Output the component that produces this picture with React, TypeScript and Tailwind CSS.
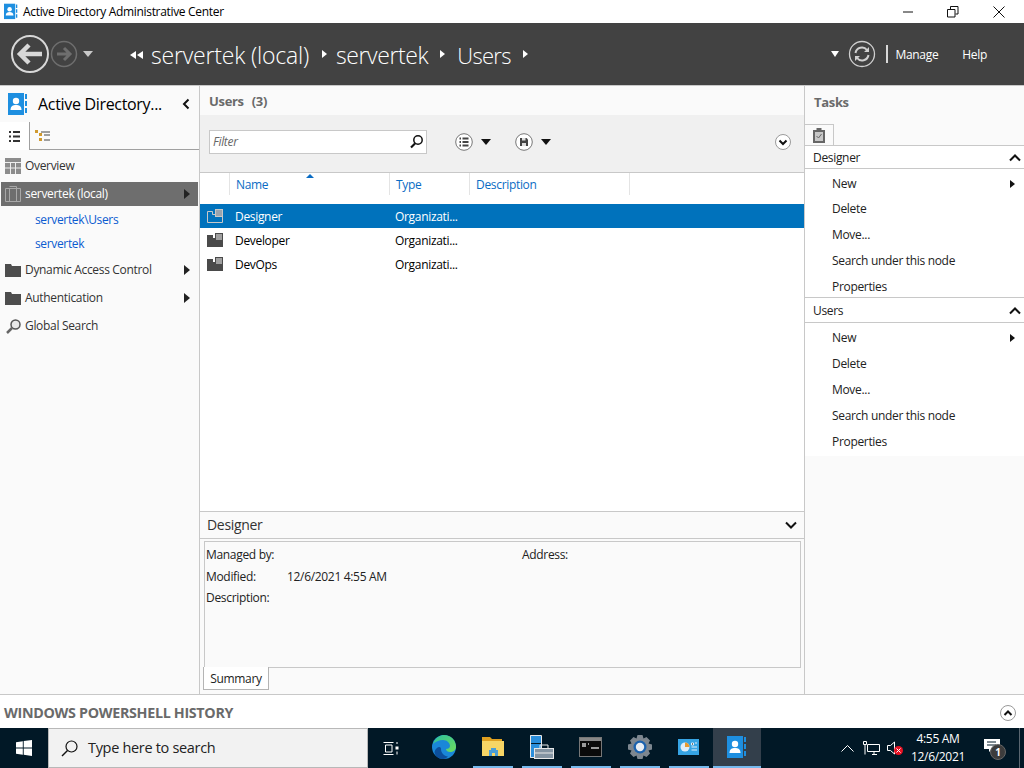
import React from "react";

const Tri = ({ cls = "border-l-white", big }: { cls?: string; big?: boolean }) => (
  <span className={`inline-block w-0 h-0 border-y-transparent ${big ? "border-y-[5px] border-l-[6px]" : "border-y-[4px] border-l-[5px]"} ${cls}`} />
);
const TriLeft = () => (
  <span className="inline-block w-0 h-0 border-y-[4px] border-y-transparent border-r-[6px] border-r-white" />
);
const Down = ({ cls = "border-t-white", w = "border-x-[5px]" }: { cls?: string; w?: string }) => (
  <span className={`inline-block w-0 h-0 border-x-transparent border-t-[6px] ${w} ${cls}`} />
);

const AdIcon = ({ s = 20 }: { s?: number }) => (
  <svg width={s} height={(s * 24) / 20} viewBox="0 0 20 24">
    <rect x="0" y="1" width="16" height="22" fill="#1e8fe0" />
    <circle cx="8" cy="9" r="3.2" fill="#fff" />
    <path d="M2.5 18c0-4 2.5-5 5.5-5s5.500 1 5.500 5z" fill="#fff" />
    <path d="M18 2v5M18 9v5M18 16v5" stroke="#1e8fe0" strokeWidth="2" />
  </svg>
);

const Folder = ({ c = "#4d4d4d" }: { c?: string }) => (
  <svg width="16" height="13" viewBox="0 0 16 13">
    <path d="M0 0h6l1 2h9v11H0z" fill={c} />
  </svg>
);

const OU = ({ sel }: { sel?: boolean }) => (
  <svg width="16" height="14" viewBox="0 0 16 14">
    {sel ? (
      <>
        <path d="M.5 2.500h5v3h10v8H.5z" fill="none" stroke="#c8c8c8" />
        <rect x="8.500" y="0.500" width="7" height="7" fill="#9aa4ae" stroke="#c8c8c8" />
      </>
    ) : (
      <>
        <path d="M0 2h6v3h10v9H0z" fill="#4a4a4a" />
        <rect x="8.500" y="0.500" width="7" height="7" fill="#a0a0a0" stroke="#4a4a4a" />
      </>
    )}
  </svg>
);

const CircleChevron = ({ up }: { up?: boolean }) => (
  <svg width="16" height="16" viewBox="0 0 16 16">
    <circle cx="8" cy="8" r="7.5" fill="#fff" stroke="#9a9a9a" />
    <path d={up ? "M4.500 10l3.500-3.500 3.500 3.500" : "M4.500 6.500l3.500 3.500 3.500-3.500"} fill="none" stroke="#111" strokeWidth="2" />
  </svg>
);

const Caret = () => (
  <svg width="12" height="8" viewBox="0 0 12 8">
    <path d="M1 6.500l5-5 5 5" fill="none" stroke="#111" strokeWidth="2" />
  </svg>
);

const Caret2 = () => (
  <svg width="12" height="8" viewBox="0 0 12 8">
    <path d="M1 1.500l5 5 5-5" fill="none" stroke="#111" strokeWidth="2" />
  </svg>
);

function TitleBar() {
  return (
    <div className="h-[23px] flex items-center bg-white shrink-0">
      <div className="ml-[4px] w-[14px] flex items-center">
        <AdIcon s={14} />
      </div>
      <span className="ml-[5px] text-[12px] text-black">Active Directory Administrative Center</span>
      <div className="ml-auto flex items-center">
        <svg width="12" height="12" viewBox="0 0 12 12" className="mr-[33px]"><path d="M1 6h10" stroke="#111" /></svg>
        <svg width="12" height="12" viewBox="0 0 12 12" className="mr-[34px]"><path d="M.5 3.500h7.500v7.500H.5zM3.500 3V.5H11v7.500H8.500" fill="none" stroke="#111" /></svg>
        <svg width="12" height="12" viewBox="0 0 12 12" className="mr-[19px]"><path d="M.5.500l11 11M11.500.500l-11 11" stroke="#111" /></svg>
      </div>
    </div>
  );
}

function Header() {
  return (
    <div className="h-[62px] bg-[#424242] flex items-center shrink-0 border-b border-[#c8c8c8] box-content text-white">
      <svg width="40" height="40" viewBox="0 0 40 40" className="ml-[10px]">
        <circle cx="20" cy="20" r="18" fill="none" stroke="#d8d8d8" strokeWidth="2" />
        <path d="M32 20H10M19 11l-9 9 9 9" fill="none" stroke="#d8d8d8" strokeWidth="4.500" />
      </svg>
      <svg width="28" height="28" viewBox="0 0 28 28">
        <circle cx="14" cy="14" r="12.500" fill="none" stroke="#6e6e6e" strokeWidth="1.500" />
        <path d="M7 14h13M14 8l6 6-6 6" fill="none" stroke="#6e6e6e" strokeWidth="3" />
      </svg>
      <span className="ml-[5px] flex"><Down cls="border-t-[#c8c8c8]" /></span>
      <div className="ml-[37px] flex items-center">
        <span className="flex gap-[1px] w-[15px] mr-[6px] pt-[2px]">
          <TriLeft />
          <TriLeft />
        </span>
        <span className="text-[23px] font-light leading-none pt-[2px] tracking-[-0.2px]">servertek (local)</span>
        <span className="ml-[13px] flex"><Tri /></span>
        <span className="ml-[9px] text-[23px] font-light leading-none pt-[2px] tracking-[-0.4px]">servertek</span>
        <span className="ml-[12px] flex"><Tri /></span>
        <span className="ml-[12px] text-[22px] font-light leading-none pt-[2px] tracking-[-0.7px]">Users</span>
        <span className="ml-[12px] flex"><Tri /></span>
      </div>
      <div className="ml-auto flex items-center">
        <Down w="border-x-[4px]" />
        <svg width="28" height="28" viewBox="0 0 28 28" className="ml-[9px]">
          <circle cx="14" cy="14" r="12.500" fill="none" stroke="#d0d0d0" strokeWidth="1.300" />
          <path d="M7.500 13a6.500 6.500 0 0 1 11.500-3l1 1M20.500 15a6.500 6.500 0 0 1-11.500 3l-1-1" fill="none" stroke="#d0d0d0" strokeWidth="2" />
          <path d="M21 7v5h-5zM7 21v-5h5z" fill="#d0d0d0" />
        </svg>
        <span className="ml-[10px] w-[2px] h-[18px] bg-[#d8d8d8]" />
        <span className="ml-[7px] text-[12px] pt-[1px]">Manage</span>
        <span className="ml-[24px] mr-[37px] text-[12px] pt-[1px]">Help</span>
      </div>
    </div>
  );
}

const navText = "text-[12px] text-[#333]";

function LeftPane() {
  return (
    <div className="w-[200px] shrink-0 bg-[#fafafa] border-r border-[#c8c8c8] flex flex-col">
      <div className="h-[36px] flex items-center">
        <span className="ml-[8px] flex"><AdIcon s={20} /></span>
        <span className="ml-[10px] text-[16px] text-black">Active Directory...</span>
        <svg width="8" height="12" viewBox="0 0 8 12" className="ml-[20px]"><path d="M6.500 1.500L2 6l4.500 4.500" fill="none" stroke="#111" strokeWidth="2" /></svg>
      </div>
      <div className="h-[28px] flex">
        <div className="w-[30px] bg-white border-r border-[#a0a0a0] flex items-center justify-center">
          <svg width="11" height="11" viewBox="0 0 11 11"><path d="M0 1h2M0 5.500h2M0 10h2" stroke="#333" strokeWidth="2" /><path d="M4 1h7M4 5.500h7M4 10h7" stroke="#333" strokeWidth="2" /></svg>
        </div>
        <div className="flex-1 border-b border-[#a0a0a0] pl-[5px] flex items-center">
          <svg width="15" height="12" viewBox="0 0 15 12"><path d="M0 0h3v3H0zM4 3h3v3H4zM4 8h3v3H4z" fill="#d09a30" /><path d="M6 2h9M9 5h6M9 10h6" stroke="#444" /></svg>
        </div>
      </div>
      <div className="h-[31px] flex items-center pl-[5px] pt-[1px]">
        <svg width="16" height="16" viewBox="0 0 16 16"><rect width="16" height="16" fill="#8c8c8c" /><path d="M0 4.500h16M5.500 4.500V16M10.500 4.500V16M0 10h16" stroke="#eee" /></svg>
        <span className={`ml-[4px] ${navText}`}>Overview</span>
      </div>
      <div className="mt-[1px] mx-[1px] h-[24px] bg-[#6e6e6e] flex items-center pl-[4px] pr-[8px]">
        <svg width="16" height="16" viewBox="0 0 16 16" fill="none" stroke="#a8a8a8"><path d="M.5 2.500h15v13H.5zM4.500 2.500v13M4.500.5h7v15M11.500 2.500v13" /></svg>
        <span className="ml-[4px] text-[12px] text-white">servertek (local)</span>
        <span className="ml-auto flex"><Tri big cls="border-l-[#222]" /></span>
      </div>
      <div className="h-[28px] pl-[35px] flex items-center text-[12px] tracking-[-0.35px] text-[#0a5bd0]">servertek\Users</div>
      <div className="h-[20px] pl-[35px] flex items-center text-[12px] tracking-[-0.35px] text-[#0a5bd0]">servertek</div>
      <div className="mt-[2px] h-[28px] pl-[5px] pr-[9px] flex items-center">
        <Folder />
        <span className={`ml-[4px] ${navText}`}>Dynamic Access Control</span>
        <span className="ml-auto flex"><Tri big cls="border-l-[#222]" /></span>
      </div>
      <div className="h-[28px] pl-[5px] pr-[9px] flex items-center">
        <Folder />
        <span className={`ml-[4px] ${navText}`}>Authentication</span>
        <span className="ml-auto flex"><Tri big cls="border-l-[#222]" /></span>
      </div>
      <div className="h-[28px] pl-[6px] flex items-center">
        <svg width="15" height="15" viewBox="0 0 15 15"><circle cx="9.500" cy="5.500" r="4.500" fill="#e8e8e8" stroke="#555" strokeWidth="1.500" /><path d="M6 9l-5 5" stroke="#666" strokeWidth="2.500" /></svg>
        <span className={`ml-[4px] ${navText}`}>Global Search</span>
      </div>
    </div>
  );
}

function Row({ name, selected }: { name: string; selected?: boolean }) {
  return (
    <div className={`h-[24px] flex items-center text-[12px] ${selected ? "bg-[#0072bc] text-white" : "text-black"}`}>
      <span className="w-[35px] pl-[7px] flex"><OU sel={selected} /></span>
      <span className="w-[160px] pt-[2px]">{name}</span>
      <span className="pt-[2px]">Organizati...</span>
    </div>
  );
}

function Center() {
  return (
    <div className="flex-1 flex flex-col min-w-0">
      <div className="h-[29px] bg-[#fafafa] pl-[9px] pt-[2px] flex items-center text-[13px] font-bold text-[#6a6a6a]">
        <span>Users</span>
        <span className="ml-[8px]">(3)</span>
      </div>
      <div className="h-[57px] bg-[#f0f0f0] border-b border-[#c8c8c8] box-content flex items-center pl-[9px] pr-[13px]">
        <div className="w-[218px] h-[24px] -mt-[4px] bg-white border border-[#c8c8c8] flex items-center pl-[3px] pr-[2px]">
          <span className="text-[12px] italic text-[#666]">Filter</span>
          <svg width="15" height="15" viewBox="0 0 15 15" className="ml-auto"><circle cx="9" cy="6" r="4.200" fill="none" stroke="#111" strokeWidth="1.500" /><path d="M6 9.500l-4 4" stroke="#111" strokeWidth="2.200" /></svg>
        </div>
        <svg width="18" height="18" viewBox="0 0 18 18" className="ml-[28px] -mt-[4px]"><circle cx="9" cy="9" r="8.300" fill="#fff" stroke="#777" /><path d="M4.500 5.500h1.500M4.500 9h1.500M4.500 12.500h1.500M7.500 5.500h6M7.500 9h6M7.500 12.500h6" stroke="#444" strokeWidth="2" /></svg>
        <span className="ml-[8px] flex -mt-[4px]"><Down cls="border-t-[#111]" /></span>
        <svg width="18" height="18" viewBox="0 0 18 18" className="ml-[24px] -mt-[4px]"><circle cx="9" cy="9" r="8.300" fill="#fff" stroke="#777" /><path d="M5 5h6.500L13 6.500V13H5z" fill="#444" /><path d="M7 5h3.500v2.500H7zM7 10h4v3H7z" fill="#ddd" /></svg>
        <span className="ml-[8px] flex -mt-[4px]"><Down cls="border-t-[#111]" /></span>
        <span className="ml-auto flex -mt-[3px]"><CircleChevron /></span>
      </div>
      <div className="h-[31px] bg-white flex text-[12px] text-[#0a6cc4]">
        <span className="w-[30px] h-[22px] border-r border-[#e4e4e4]" />
        <span className="w-[160px] h-[22px] border-r border-[#e4e4e4] pl-[6px] pt-[3px] relative">
          Name
          <span className="absolute left-[76px] top-[1px] w-0 h-0 border-x-[4px] border-x-transparent border-b-[4px] border-b-[#0a6cc4]" />
        </span>
        <span className="w-[80px] h-[22px] border-r border-[#e4e4e4] pl-[6px] pt-[3px]">Type</span>
        <span className="w-[160px] h-[22px] border-r border-[#e4e4e4] pl-[6px] pt-[3px]">Description</span>
      </div>
      <div className="flex-1 bg-white">
        <Row name="Designer" selected />
        <Row name="Developer" />
        <Row name="DevOps" />
      </div>
      <div className="h-[183px] bg-[#fafafa] border-t border-[#c8c8c8] flex flex-col shrink-0">
        <div className="h-[26px] px-[7px] flex items-center border-b border-[#c8c8c8] box-content">
          <span className="text-[14px] text-[#333] -mt-[1px]">Designer</span>
          <span className="ml-auto flex"><Caret2 /></span>
        </div>
        <div className="mt-[2px] ml-[4px] mr-[3px] h-[127px] border border-[#c8c8c8] text-[12px] text-[#222] pl-[1px] pt-[2px]">
          <div className="h-[22px] flex items-center"><span className="w-[316px]">Managed by:</span><span>Address:</span></div>
          <div className="h-[21px] flex items-center"><span className="w-[81px]">Modified:</span><span>12/6/2021 4:55 AM</span></div>
          <div className="h-[21px] flex items-center">Description:</div>
        </div>
        <div className="ml-[3px] -mt-[1px] w-[66px] h-[23px] pt-[1px] bg-white border border-t-0 border-[#b4b4b4] flex items-center justify-center text-[12px] text-[#222] z-10">Summary</div>
      </div>
    </div>
  );
}

function TaskSection({ title, last }: { title: string; last?: boolean }) {
  return (
    <div className="bg-white">
      <div className={`flex items-center pl-[8px] pr-[3px] border-b border-[#c8c8c8] box-content ${last ? "h-[22px] pt-[2px]" : "h-[21px] pt-[1px]"}`}>
        <span className="text-[12px] text-[#222]">{title}</span>
        <span className="ml-auto flex"><Caret /></span>
      </div>
      <div className="pl-[27px] pr-[9px] pt-[2px] text-[12px] text-[#222]">
        <div className={`flex items-center ${last ? "h-[26px]" : "h-[25px]"}`}>New<span className="ml-auto flex"><Tri cls="border-l-[#111]" /></span></div>
        <div className="h-[26px] flex items-center">Delete</div>
        <div className="h-[26px] flex items-center">Move...</div>
        <div className="h-[26px] flex items-center">Search under this node</div>
        <div className={`flex items-start pt-[4px] ${last ? "h-[27px]" : "h-[23px]"}`}>Properties</div>
      </div>
    </div>
  );
}

function RightPane() {
  return (
    <div className="w-[220px] shrink-0 bg-[#fafafa] border-l border-[#c8c8c8] flex flex-col">
      <div className="h-[38px] pl-[9px] pb-[5px] flex items-center text-[13px] font-bold text-[#6a6a6a]">Tasks</div>
      <div className="h-[21px] flex border-b border-[#c8c8c8] box-content">
        <div className="w-[29px] h-[21px] border-t border-r border-[#c8c8c8] flex items-center justify-center">
          <svg width="12" height="15" viewBox="0 0 12 15"><path d="M0 2h3.500V0h5v2H12v13H0z" fill="#666" /><rect x="2" y="4" width="8" height="9" fill="#c8c8c8" /><path d="M3.500 8l2 2 3-4" fill="none" stroke="#666" /></svg>
        </div>
      </div>
      <TaskSection title="Designer" />
      <div className="h-[1px] bg-[#c8c8c8]" />
      <TaskSection title="Users" last />
    </div>
  );
}

function PowerShell() {
  return (
    <div className="h-[33px] bg-white border-t border-[#c8c8c8] box-content shrink-0 flex items-center pl-[4px] pr-[8px]">
      <span className="text-[14.300px] font-bold text-[#6a6a6a] pt-[3px]">WINDOWS POWERSHELL HISTORY</span>
      <span className="ml-auto flex pt-[3px]"><CircleChevron up /></span>
    </div>
  );
}

function TaskIcon({ children, run, active }: { children: React.ReactNode; run?: boolean; active?: boolean }) {
  return (
    <div className={`flex flex-col items-center ${active ? "w-[48px] bg-[#333f4b]" : "w-[49px]"}`}>
      <div className="flex-1 flex items-center justify-center">{children}</div>
      <div className={`h-[2px] ${active ? "w-full" : "w-[40px]"} ${run ? "bg-[#76b9ed]" : ""}`} />
    </div>
  );
}

function Taskbar() {
  return (
    <div className="h-[40px] bg-[#011826] flex items-stretch shrink-0">
      <div className="w-[48px] flex items-center justify-center">
        <svg width="16" height="16" viewBox="0 0 16 16"><path d="M0 2.300l6.800-1v6.300H0zM7.700 1.100L16 0v7.600H7.700zM0 8.500h6.800v6.300l-6.800-1zM7.700 8.500H16V16l-8.300-1.200z" fill="#fff" /></svg>
      </div>
      <div className="w-[320px] bg-[#f2f2f2] border border-[#b8b8b8] flex items-center pl-[12px]">
        <svg width="17" height="17" viewBox="0 0 17 17"><circle cx="10.500" cy="6.500" r="5.500" fill="none" stroke="#111" strokeWidth="1.200" /><path d="M6.500 10.500L1 16" stroke="#111" strokeWidth="1.400" /></svg>
        <span className="ml-[10px] text-[14.500px] text-[#222]">Type here to search</span>
      </div>
      <div className="w-[51px] flex items-center justify-center pr-[6px]">
        <svg width="16" height="15" viewBox="0 0 16 15" fill="none" stroke="#fff"><path d="M.5 1.500h10M.5 13.500h10M2.500 4h6.500v7H2.500zM14 1v2M14 10.500v3" /><rect x="12.500" y="5.500" width="3" height="3" fill="#fff" stroke="none" /></svg>
      </div>
      <TaskIcon>
        <svg width="24" height="24" viewBox="0 0 24 24">
          <defs>
            <linearGradient id="eg" x1="0" y1="0" x2="1" y2="1"><stop offset="0" stopColor="#2bc0a0" /><stop offset="1" stopColor="#6fdc5c" /></linearGradient>
          </defs>
          <circle cx="12" cy="12" r="12" fill="#1a87d8" />
          <path d="M1 9C3 2 9 0 12 0c7 0 12 5 12 12 0 3-3 5-6 5-2 0-4-1-4-3 2 0 4-1 4-3 0-3-3-6-7-6-4 0-8 2-10 4z" fill="url(#eg)" />
          <path d="M9 14c0 4 3 7 7 7.500-1 1-3 2.500-5 2.500-5 0-8-3-8.500-7 .5-3 3-5 5-5 1 0 1.500 1 1.500 2z" fill="#0c4f9c" />
        </svg>
      </TaskIcon>
      <TaskIcon run>
        <svg width="22" height="20" viewBox="0 0 22 20"><path d="M0 0h8l2 2h10v3H0z" fill="#dfa020" /><rect y="4" width="22" height="15" fill="#f7d565" /><path d="M7 19v-6h2v-2h5v2h2v6h-3v-3h-3v3z" fill="#4a9ed8" /></svg>
      </TaskIcon>
      <TaskIcon run>
        <svg width="24" height="24" viewBox="0 0 24 24"><rect x="0" y="0" width="11" height="8" fill="#2b8fdc" /><rect x="0" y="9" width="11" height="14" fill="#2b8fdc" /><path d="M.5.500h11v22H.5z" fill="none" stroke="#e8e8e8" /><rect x="4.500" y="13.500" width="19" height="10" fill="#8494a2" stroke="#e8e8e8" /><path d="M10 13v-3h8v3M4 18h20" fill="none" stroke="#e8e8e8" /></svg>
      </TaskIcon>
      <TaskIcon run>
        <svg width="23" height="20" viewBox="0 0 23 20"><rect x=".5" y=".5" width="22" height="19" fill="#0a0a0a" stroke="#777" /><rect x="1" y="1" width="21" height="3" fill="#888" /><path d="M3 7h4M3 9h4M9 7h1M12 11h8" stroke="#ccc" strokeWidth="1.300" /></svg>
      </TaskIcon>
      <TaskIcon run>
        <svg width="24" height="24" viewBox="0 0 24 24"><path d="M9.500 0h5l1 3.500 3-1.500 3.500 3.500-1.500 3 3.500 1v5l-3.500 1 1.500 3-3.500 3.500-3-1.500-1 3.500h-5l-1-3.500-3 1.500L2 18.500l1.500-3L0 14.500v-5l3.500-1L2 5.500 5.500 2l3 1.500z" fill="#7d8790" /><circle cx="12" cy="12" r="6.500" fill="#1b62ae" /><circle cx="12" cy="12" r="4.200" fill="#e8eef4" /></svg>
      </TaskIcon>
      <TaskIcon run>
        <svg width="21" height="16" viewBox="0 0 21 16"><rect width="21" height="16" fill="#36a4e4" /><circle cx="7" cy="8" r="4.500" fill="#dfeefa" /><path d="M7 8V3.500A4.500 4.500 0 0 1 11.500 8z" fill="#e89a30" /><path d="M13.500 4h2v2h-2zM17 4h2M13.500 8h5.500M13.500 11h5.500" stroke="#dfeefa" /></svg>
      </TaskIcon>
      <TaskIcon run active>
        <AdIcon s={20} />
      </TaskIcon>
      <div className="ml-auto flex items-center text-white">
        <svg width="13" height="8" viewBox="0 0 13 8" className="mr-[9px]"><path d="M.5 7.500l6-6 6 6" fill="none" stroke="#fff" /></svg>
        <svg width="17" height="14" viewBox="0 0 17 14" fill="none" stroke="#fff" className="mr-[7px]"><path d="M4.500 3.500h12v7h-12zM9 13.500h5M11 10.500v3" /><path d="M.5.500h3v3h-3zM2 3.500v10" /></svg>
        <span className="relative mr-[14px] flex">
          <svg width="10" height="14" viewBox="0 0 10 14" fill="none" stroke="#fff"><path d="M.5 4.500h3l4-3.500v12l-4-3.500h-3z" /></svg>
          <span className="absolute left-[7px] top-[5px] w-[9px] h-[9px] rounded-full bg-[#e81123] flex items-center justify-center">
            <svg width="5" height="5" viewBox="0 0 5 5"><path d="M.5.500l4 4M4.500.500l-4 4" stroke="#fff" /></svg>
          </span>
        </span>
        <div className="w-[54px] text-center text-[12px] leading-[18px]">
          <div>4:55 AM</div>
          <div>12/6/2021</div>
        </div>
        <span className="relative ml-[19px] mr-[19px] flex -mt-[5px]">
          <svg width="16" height="14" viewBox="0 0 16 14"><path d="M0 0h16v10H8l-3 3v-3H0z" fill="#fff" /><path d="M3 3h9M3 6h9" stroke="#011826" /></svg>
          <span className="absolute left-[6px] top-[5px] w-[16px] h-[16px] rounded-full bg-[#3c3c3c] border border-[#666] flex items-center justify-center text-[10px] font-bold leading-none">1</span>
        </span>
        <span className="w-[1px] h-full bg-[#5a6670] mr-[4px]" />
      </div>
    </div>
  );
}

export default function App() {
  return (
    <div className="w-[1024px] h-[768px] overflow-hidden flex flex-col bg-white font-['Open_Sans','Noto_Sans',sans-serif] tracking-[-0.02em]">
      <TitleBar />
      <Header />
      <div className="flex-1 flex min-h-0">
        <LeftPane />
        <Center />
        <RightPane />
      </div>
      <PowerShell />
      <Taskbar />
    </div>
  );
}
